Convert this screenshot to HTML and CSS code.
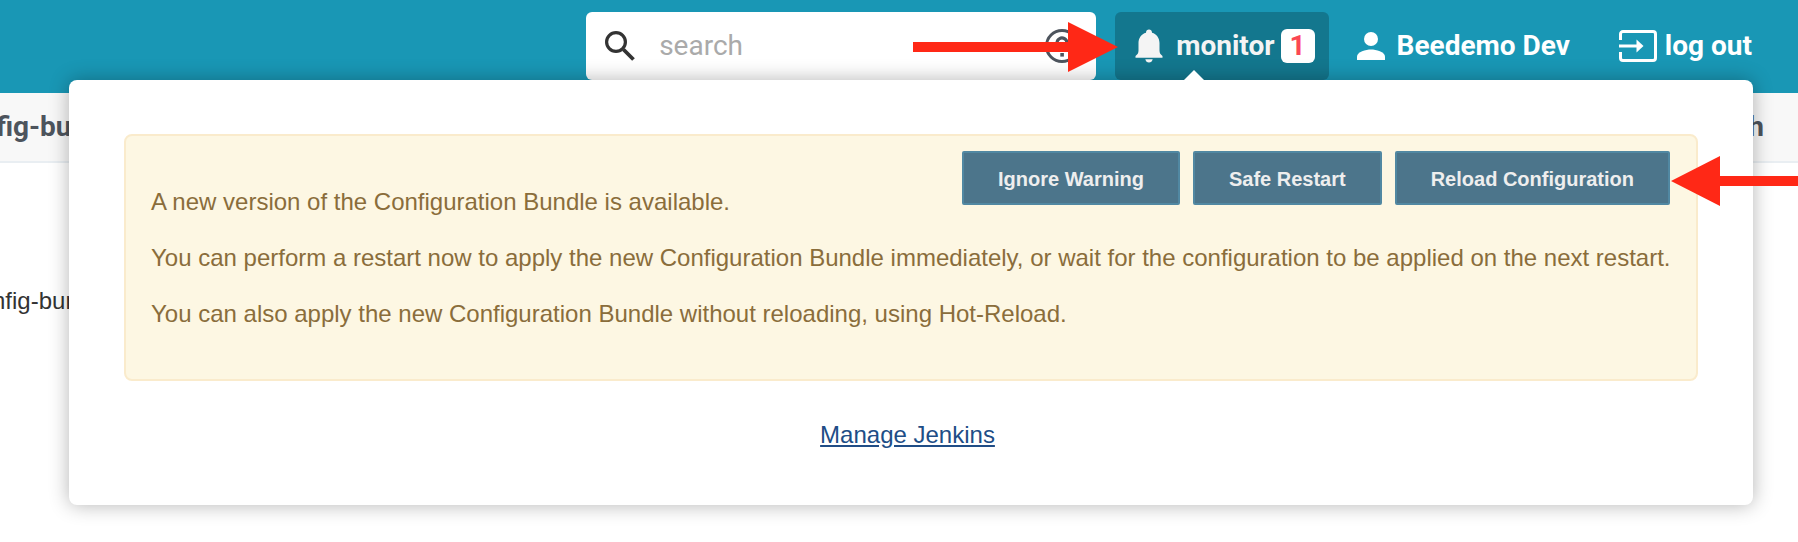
FILE: index.html
```html
<!DOCTYPE html>
<html lang="en">
<head>
<meta charset="utf-8">
<title>Jenkins</title>
<link rel="stylesheet" href="styles.css">
</head>
<body>
<header class="header">
  <form class="search" role="search">
    <svg class="search-icon" viewBox="0 0 30 30" aria-hidden="true"><circle cx="11" cy="11" r="9.4" fill="none" stroke="#333" stroke-width="3.2"/><path d="M18.500 18.500 28.500 28.500" stroke="#333" stroke-width="3.800"/></svg>
    <input class="search-input" type="search" placeholder="search" aria-label="search">
    <a class="help" href="#" aria-label="Search help"><svg class="help-icon" viewBox="0 0 34 34" aria-hidden="true"><circle cx="17" cy="17" r="15.500" fill="none" stroke="#4d545d" stroke-width="3"/><path d="M12 14a5 5 0 1 1 8 4c-2 1.500-3 2-3 4" fill="none" stroke="#4d545d" stroke-width="3.200"/><path d="M15.300 24h3.600v3.600h-3.600z" fill="#4d545d"/></svg></a>
  </form>
  <button class="monitor" type="button" aria-expanded="true">
    <svg class="bell-icon" viewBox="0 0 28 34" aria-hidden="true"><path d="M14 .5c1.700 0 3 1.200 3 2.900v.3c4.700 1.300 7.500 5.300 7.500 10.300v7.500c0 2.500 1 4 3 5.500v1.700H.5v-1.700c2-1.500 3-3 3-5.500v-7.500C3.500 9 6.300 5 11 3.700v-.3C11 1.700 12.300.5 14 .5zM10.300 30.200h7.400c-.4 2-1.800 3.300-3.700 3.300s-3.300-1.300-3.700-3.300z" fill="#f4f4f4"/></svg>
    <span>monitor</span>
    <span class="count">1</span>
  </button>
  <a class="user" href="#">
    <svg class="user-icon" viewBox="0 0 28 28" aria-hidden="true"><circle cx="14" cy="7" r="7" fill="#fff"/><path d="M0 28v-3.500C0 20 9 17.500 14 17.500S28 20 28 24.500V28z" fill="#fff"/></svg>
    <span>Beedemo Dev</span>
  </a>
  <a class="logout" href="#">
    <svg class="logout-icon" viewBox="0 0 38 32" aria-hidden="true"><path d="M1.500 10V4a2.500 2.500 0 0 1 2.500-2.500h30A2.500 2.500 0 0 1 36.500 4v24a2.500 2.500 0 0 1-2.500 2.500H4A2.500 2.500 0 0 1 1.500 28v-6M0 16h19" fill="none" stroke="#fff" stroke-width="3"/><path d="M17.500 9.500 24.500 16l-7 6.500z" fill="#fff"/></svg>
    <span>log out</span>
  </a>
</header>
<nav class="breadcrumbs" aria-label="Breadcrumbs">
  <span class="crumb">fig-bu</span>
  <span class="refresh">h</span>
</nav>
<main class="content"><p class="name">nfig-bun</p></main>

<section class="popup" aria-label="Monitors">
  <div class="alert">
    <form class="actions">
      <button class="action" type="button">Ignore Warning</button>
      <button class="action" type="button">Safe Restart</button>
      <button class="action" type="button">Reload Configuration</button>
    </form>
    <div class="message">
      <p>A new version of the Configuration Bundle is available.</p>
      <p>You can perform a restart now to apply the new Configuration Bundle immediately, or wait for the configuration to be applied on the next restart.</p>
      <p>You can also apply the new Configuration Bundle without reloading, using Hot-Reload.</p>
    </div>
  </div>
  <a class="manage" href="#">Manage Jenkins</a>
</section>

<svg class="arrow arrow-monitor" viewBox="0 0 206 50" aria-hidden="true"><path d="M0 20h155V0l50 25-50 25V30H0z" fill="#ff2816"/></svg>
<svg class="arrow arrow-reload" viewBox="0 0 127 50" aria-hidden="true"><path d="M127 20H49V0L0 25l49 25V30h78z" fill="#ff2816"/></svg>
</body>
</html>
```
FILE: styles.css
```css
* { box-sizing: border-box; }
body {
  margin: 0;
  position: relative;
  min-height: 100vh;
  overflow: hidden;
  background: #fff;
  color: #333;
  font: 24px/32px "Liberation Sans", Arial, sans-serif;
}
p { margin: 0; }
svg { display: block; flex: none; }
.header {
  display: flex;
  justify-content: flex-end;
  padding: 12px 46px 13px;
  background: #1997b5;
  font: bold 28px/36px Roboto, sans-serif;
}
.search {
  display: flex;
  align-items: center;
  flex: 0 1 510px;
  height: 68px;
  margin-right: 19px;
  padding: 0 17px 0 19px;
  border-radius: 6px;
  background: #fff;
}
.search-icon { width: 30px; height: 30px; }
.search-input {
  flex: 1;
  min-width: 0;
  margin-left: 24px;
  padding: 0;
  border: 0;
  background: none;
  font: 28px/36px Roboto, sans-serif;
}
.search-input::placeholder { color: #aaa; opacity: 1; }
.help-icon { width: 34px; height: 34px; }
.monitor {
  position: relative;
  display: flex;
  align-items: center;
  padding: 0 14px 0 20px;
  border: 0;
  border-radius: 6px;
  background: #13778e;
  color: #f4f4f4;
  font: inherit;
}
.monitor::after {
  content: "";
  position: absolute;
  z-index: 3;
  left: 69px;
  bottom: 0;
  border: 10px solid transparent;
  border-top: 0;
  border-bottom-color: #fff;
}
.bell-icon { width: 28px; height: 34px; margin-right: 13px; }
.count {
  width: 34px;
  margin-left: 6px;
  border-radius: 6px;
  background: #fff;
  color: #fb4753;
  line-height: 34px;
  text-align: center;
}
.user, .logout {
  display: flex;
  align-items: center;
  color: #fff;
  text-decoration: none;
}
.user { gap: 12px; margin-left: 28px; }
.user-icon { width: 28px; height: 28px; }
.logout { gap: 8px; margin-left: 49px; }
.logout-icon { width: 38px; height: 32px; }
.breadcrumbs {
  display: flex;
  justify-content: space-between;
  padding: 16px 34px 16px 0;
  border-bottom: 2px solid #e9eef2;
  background: #f8f8f8;
  color: #4d545d;
  font: bold 28px/36px Roboto, sans-serif;
}
.crumb { margin-left: -4px; }
.content { padding-top: 122px; }
.name { margin-left: -8px; }
.popup {
  position: absolute;
  z-index: 2;
  top: 80px;
  left: 69px;
  right: 45px;
  padding: 54px 55px;
  border-radius: 8px;
  background: #fff;
  box-shadow: 0 0 20px rgba(0, 0, 0, .3);
  text-align: center;
}
.alert {
  margin-bottom: 38px;
  padding: 15px 24px 25px 25px;
  border: 2px solid #faebcc;
  border-radius: 8px;
  background: #fdf7e3;
  color: #8a6d3b;
  text-align: left;
}
.actions { display: flex; gap: 13px; float: right; margin-right: 2px; }
.action {
  height: 54px;
  padding: 2px 34px 0;
  border: 2px solid #5188a2;
  border-radius: 2px;
  background: #4c758b;
  color: #eee;
  font: bold 20px/24px "Liberation Sans", Arial, sans-serif;
}
.message { padding-top: 35px; }
.message p { margin-bottom: 24px; }
.manage { margin-right: 7px; color: #204d86; text-underline-offset: 2px; }
.arrow { position: absolute; z-index: 4; }
.arrow-monitor { width: 206px; height: 50px; top: 22px; right: 679px; }
.arrow-reload { width: 127px; height: 50px; top: 156px; right: 0; }
```
